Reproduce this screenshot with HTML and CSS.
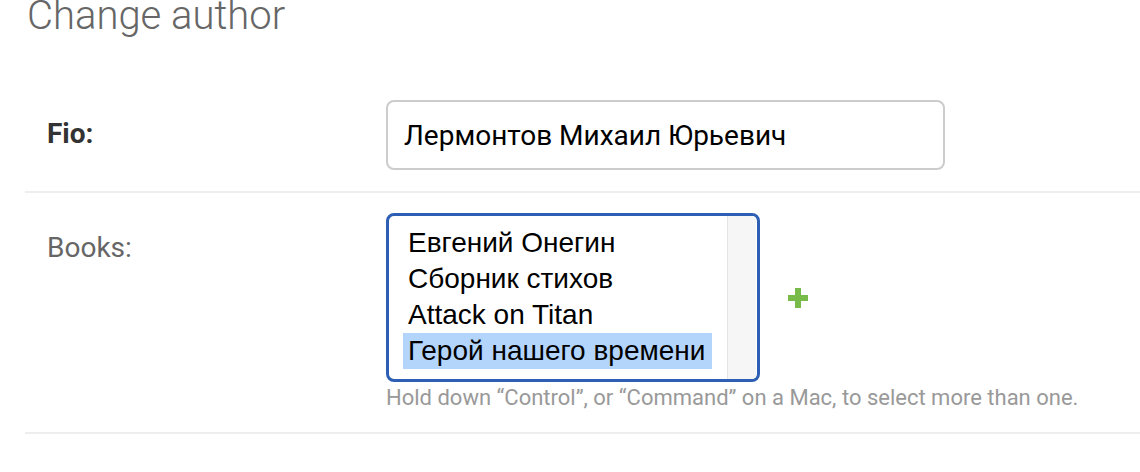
FILE: index.html
```html
<!DOCTYPE html>
<html lang="ru">
<head>
  <meta charset="UTF-8" />
  <meta name="viewport" content="width=device-width, initial-scale=1" />
  <title>Change author</title>
  <link rel="stylesheet" href="styles.css">
</head>
<body>
<h1>Change author</h1>

<form class="change-form">
  <div class="form-row">
    <label class="required" for="id_fio">Fio:</label>
    <div class="field">
      <input type="text" id="id_fio" class="text-input" value="Лермонтов Михаил Юрьевич">
    </div>
  </div>

  <div class="form-row">
    <label>Books:</label>
    <div class="field">
      <div class="related-widget">
        <div class="select-box">
          <div class="options">
            <div class="option">Евгений Онегин</div>
            <div class="option">Сборник стихов</div>
            <div class="option">Attack on Titan</div>
            <div class="option selected">Герой нашего времени</div>
          </div>
          <div class="scroll-track"></div>
        </div>
        <a href="#" class="add-related" title="Add another book">
          <svg width="20" height="20" viewBox="0 0 20 20"><path d="M10 0v20M0 10h20" stroke="#78bb48" stroke-width="6" fill="none"/></svg>
        </a>
      </div>
      <div class="help">Hold down “Control”, or “Command” on a Mac, to select more than one.</div>
    </div>
  </div>
</form>
</body>
</html>
```

FILE: styles.css
```css
* { box-sizing: border-box; }
body { margin: 0; background: #fff; color: #333; font-family: Roboto, "Liberation Sans", sans-serif; }
h1 { margin: -6px 0 0 27px; font-size: 40px; font-weight: 300; color: #666; line-height: 44px; height: 86px; }

.change-form { margin-left: 25px; }
.form-row { display: flex; align-items: flex-start; padding: 20px 0 21px; border-bottom: 2px solid #eee; }
.form-row label { width: 339px; margin-left: 22px; font-size: 28px; color: #666; padding-top: 18px; }
.form-row label.required { font-weight: 700; color: #333; padding-top: 17px; }

.text-input {
  width: 559px; height: 70px; border: 2px solid #ccc; border-radius: 8px;
  padding: 0 16px; font-family: Roboto, sans-serif; font-size: 28px; color: #000; background: #fff;
}

.related-widget { display: flex; align-items: center; }
.select-box {
  display: flex; width: 374px; height: 169px; border: 3px solid #2d5fb5; border-radius: 8px;
  background: #fff; overflow: hidden;
}
.options { flex: 1; padding: 9px 0 0 14px; font-family: "Liberation Sans", Arial, sans-serif; font-size: 28px; color: #000; }
.option { height: 36px; line-height: 36px; padding: 0 5px; width: 309px; white-space: nowrap; }
.option.selected { background: #b4d5fb; }
.scroll-track { width: 29px; margin-right: 1px; background: #f6f6f6; border-left: 1px solid #e4e4e4; }

.add-related { display: flex; margin-left: 28px; }
.help { margin-top: 3px; font-size: 22px; color: #999; line-height: 26px; }
```
